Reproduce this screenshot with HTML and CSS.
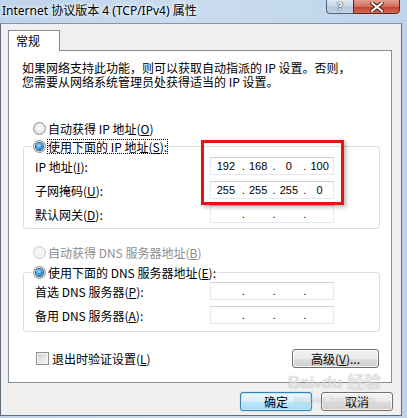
FILE: index.html
```html
<!DOCTYPE html>
<html lang="zh-CN">
<head>
    <meta charset="UTF-8">
    <title>Internet 协议版本 4 (TCP/IPv4) 属性</title>
    <link rel="stylesheet" href="styles.css">
</head>
<body>

<div class="window">
    <!-- 标题栏 -->
    <div class="titlebar">
        <span class="title">Internet 协议版本 4 (TCP/IPv4) 属性</span>
        <div class="caption-btns">
            <span class="cap-btn help">?</span>
            <span class="cap-btn close">
                <svg viewBox="0 0 14 10" width="14" height="10">
                    <path d="M2 1L12 9M12 1L2 9" stroke="#4a1a14" stroke-width="4" stroke-linecap="square"/>
                    <path d="M2 1L12 9M12 1L2 9" stroke="#fff" stroke-width="2" stroke-linecap="square"/>
                </svg>
            </span>
        </div>
    </div>

    <div class="client">
        <div class="tabs">
            <span class="tab">常规</span>
        </div>

        <div class="panel">
            <p class="desc">如果网络支持此功能，则可以获取自动指派的 IP 设置。否则，<br>您需要从网络系统管理员处获得适当的 IP 设置。</p>

            <label class="radio-row first"><span class="radio"></span>自动获得 IP 地址(<u>O</u>)</label>

            <fieldset class="group ip-group">
                <legend><span class="radio-row"><span class="radio checked"></span><span class="focus">使用下面的 IP 地址(<u>S</u>):</span></span></legend>
                <div class="field-row">
                    <span class="field-label">IP 地址(<u>I</u>):</span>
                    <div class="ip"><span class="oct">192</span><span class="dot">.</span><span class="oct">168</span><span class="dot">.</span><span class="oct">0</span><span class="dot">.</span><span class="oct">100</span></div>
                </div>
                <div class="field-row">
                    <span class="field-label">子网掩码(<u>U</u>):</span>
                    <div class="ip"><span class="oct">255</span><span class="dot">.</span><span class="oct">255</span><span class="dot">.</span><span class="oct">255</span><span class="dot">.</span><span class="oct">0</span></div>
                </div>
                <div class="field-row">
                    <span class="field-label">默认网关(<u>D</u>):</span>
                    <div class="ip"><span class="oct"></span><span class="dot">.</span><span class="oct"></span><span class="dot">.</span><span class="oct"></span><span class="dot">.</span><span class="oct"></span></div>
                </div>
            </fieldset>

            <label class="radio-row disabled dns-auto"><span class="radio"></span>自动获得 DNS 服务器地址(<u>B</u>)</label>

            <fieldset class="group dns-group">
                <legend><span class="radio-row"><span class="radio checked"></span>使用下面的 DNS 服务器地址(<u>E</u>):</span></legend>
                <div class="field-row">
                    <span class="field-label">首选 DNS 服务器(<u>P</u>):</span>
                    <div class="ip"><span class="oct"></span><span class="dot">.</span><span class="oct"></span><span class="dot">.</span><span class="oct"></span><span class="dot">.</span><span class="oct"></span></div>
                </div>
                <div class="field-row">
                    <span class="field-label">备用 DNS 服务器(<u>A</u>):</span>
                    <div class="ip"><span class="oct"></span><span class="dot">.</span><span class="oct"></span><span class="dot">.</span><span class="oct"></span><span class="dot">.</span><span class="oct"></span></div>
                </div>
            </fieldset>

            <div class="bottom-row">
                <label class="check-row"><span class="checkbox"></span>退出时验证设置(<u>L</u>)</label>
                <button class="btn advanced">高级(<u>V</u>)...</button>
            </div>

            <!-- 红框标注 -->
            <div class="highlight"></div>
        </div>

        <div class="dialog-btns">
            <button class="btn default">确定</button>
            <button class="btn">取消</button>
        </div>
    </div>

    <!-- 水印 -->
    <div class="watermark">
        <span class="wm-logo">Bai<span class="paw">●</span>du 经验</span>
        <span class="wm-url">jingyan.baidu.com</span>
    </div>
</div>

</body>
</html>
```

FILE: styles.css
```css
* {
    box-sizing: border-box;
}

body {
    margin: 0;
    background-color: #b9d1ea;
    font-family: "Noto Sans CJK SC", sans-serif;
    font-size: 12px;
    color: #000;
}

.window {
    position: relative;
    width: 407px;
    height: 418px;
    overflow: hidden;
    background: linear-gradient(to right, #bdd3eb, #c9dcf0 45%, #bfd4ec);
}

/* 标题栏 */
.titlebar {
    height: 23px;
    display: flex;
    justify-content: space-between;
    align-items: flex-start;
}

.title {
    padding: 4px 0 0 2px;
    font-family: "Noto Sans", "Noto Sans CJK SC", sans-serif;
    font-size: 12px;
    line-height: 13px;
    text-shadow: 0 0 6px #fff, 0 0 3px #fff;
}

.caption-btns {
    display: flex;
    margin-top: -1px;
    margin-right: 7px;
}

.cap-btn {
    height: 15px;
    display: flex;
    align-items: center;
    justify-content: center;
    border: 1px solid #4f6478;
}

.help {
    width: 27px;
    border-right: none;
    border-radius: 0 0 0 4px;
    background: linear-gradient(#dfe8f3, #c5d4e5 50%, #b3c6dc 51%, #c3d3e4);
    color: #fff;
    font-family: "DejaVu Sans", sans-serif;
    font-weight: bold;
    font-size: 11px;
    text-shadow: 0 0 1px #2b3e52, 0 0 1px #2b3e52, 0 0 1px #2b3e52;
}

.close {
    width: 47px;
    border-color: #5b2620;
    border-radius: 0 0 4px 0;
    background: linear-gradient(#e3a092, #d36d5c 50%, #c2402e 51%, #d26a4f);
}

/* 窗口内容 */
.client {
    height: 393px;
    width: 402px;
    background-color: #f0f0f0;
    border: 1px solid #5e6b78;
    border-top-color: #8395a8;
    display: flex;
    flex-direction: column;
}

.tabs {
    display: flex;
    margin: 6px 0 -1px 7px;
    position: relative;
    z-index: 2;
}

.tab {
    width: 52px;
    height: 21px;
    padding: 2px 0 0 7px;
    background-color: #fff;
    border: 1px solid #898c95;
    border-bottom: none;
    font-size: 12px;
    line-height: 16px;
}

.panel {
    position: relative;
    margin-left: 7px;
    width: 384px;
    padding: 0 0 14px 0;
    background-color: #fff;
    border: 1px solid #898c95;
}

.desc {
    margin: 10px 0 0 13px;
    line-height: 14px;
    font-size: 12px;
    white-space: nowrap;
}

/* 单选按钮 */
.radio-row {
    display: flex;
    align-items: center;
    height: 13px;
    line-height: 13px;
    white-space: nowrap;
}

.radio-row.first {
    margin: 33px 0 0 24px;
}

.radio-row.dns-auto {
    margin: 17px 0 0 24px;
}

.radio-row.disabled {
    color: #8d8d8d;
}

.radio {
    position: relative;
    flex: none;
    width: 13px;
    height: 13px;
    margin-right: 2px;
    border-radius: 50%;
    border: 1px solid #8e8f8f;
    background: radial-gradient(circle at 50% 45%, #fdfdfd 0, #eeeeee 45%, #cfcfcf 100%);
}

.disabled .radio {
    border-color: #c9c9c9;
    background: #f4f4f4;
}

.radio.checked::after {
    content: "";
    position: absolute;
    left: 2px;
    top: 2px;
    width: 7px;
    height: 7px;
    border-radius: 50%;
    background: radial-gradient(circle at 40% 35%, #a9e0ff 0, #3c9de3 45%, #11549e 100%);
    box-shadow: 0 0 0 1px #1c5f95;
}

.focus {
    outline: 1px dotted #000;
    outline-offset: 0;
}

/* 分组框 */
.group {
    margin: 5px 0 0 14px;
    width: 357px;
    padding: 0 0 5px 11px;
    border: 1px solid #d5dfe5;
    border-radius: 3px;
}

.group legend {
    margin-left: -3px;
    padding: 0 1px;
}

.dns-group {
    margin-top: 7px;
    padding-bottom: 7px;
}

.field-row {
    display: flex;
    align-items: center;
    height: 18px;
    margin-top: 6px;
    white-space: nowrap;
}

.ip-group .field-row:first-of-type {
    margin-top: 4px;
}

.dns-group .field-row:first-of-type {
    margin-top: 3px;
}

.field-label {
    width: 175px;
}

.ip {
    display: flex;
    align-items: center;
    width: 124px;
    height: 18px;
    background-color: #fff;
    border: 1px solid #e3e9ef;
    border-top-color: #c9d0d8;
    font-family: "Liberation Sans", sans-serif;
    font-size: 11px;
}

.oct {
    width: 27px;
    text-align: center;
}

.oct:first-child {
    width: 30px;
}

.dot {
    width: 3px;
    margin-left: 1px;
    text-align: center;
}

/* 底部 */
.bottom-row {
    display: flex;
    justify-content: space-between;
    align-items: center;
    margin: 17px 12px 0 27px;
}

.check-row {
    display: flex;
    align-items: center;
    white-space: nowrap;
}

.checkbox {
    width: 13px;
    height: 13px;
    margin-right: 3px;
    border: 1px solid #8e8f8f;
    background: linear-gradient(135deg, #cdd1d6, #f7f7f7);
    box-shadow: inset 0 0 0 1px #f4f4f4;
}

.btn {
    height: 19px;
    padding: 0;
    border: 1px solid #707070;
    border-radius: 3px;
    background: linear-gradient(#f3f3f3 0, #ebebeb 50%, #dddddd 51%, #cfcfcf 100%);
    box-shadow: inset 0 0 0 1px rgba(255, 255, 255, 0.7);
    font-family: "Noto Sans CJK SC", sans-serif;
    font-size: 12px;
    line-height: 16px;
    color: #000;
}

.btn.advanced {
    width: 87px;
}

.dialog-btns {
    display: flex;
    justify-content: flex-end;
    gap: 9px;
    margin: 9px 8px 0 0;
}

.dialog-btns .btn {
    width: 72px;
}

.btn.default {
    border-color: #3c7fb1;
    background: linear-gradient(#eaf6fd 0, #d9f0fc 50%, #bee6fd 51%, #a7d9f5 100%);
    box-shadow: inset 0 0 0 1px #bde9fb, 0 0 1px #3c7fb1;
}

/* 红框 */
.highlight {
    position: absolute;
    left: 192px;
    top: 89px;
    width: 143px;
    height: 65px;
    border: 3px solid #ee1111;
    box-shadow: 2px 2px 4px rgba(0, 0, 0, 0.3);
    pointer-events: none;
}

/* 水印 */
.watermark {
    position: absolute;
    left: 288px;
    top: 374px;
    display: flex;
    flex-direction: column;
    align-items: center;
    color: rgba(255, 255, 255, 0.55);
    text-shadow: 0 0 1px rgba(110, 110, 110, 0.45);
    pointer-events: none;
}

.wm-logo {
    font-family: "Liberation Sans", "Noto Sans CJK SC", sans-serif;
    font-weight: bold;
    font-size: 17px;
    line-height: 18px;
}

.paw {
    font-size: 12px;
}

.wm-url {
    font-family: "Liberation Serif", serif;
    font-size: 11px;
    line-height: 12px;
}
```
